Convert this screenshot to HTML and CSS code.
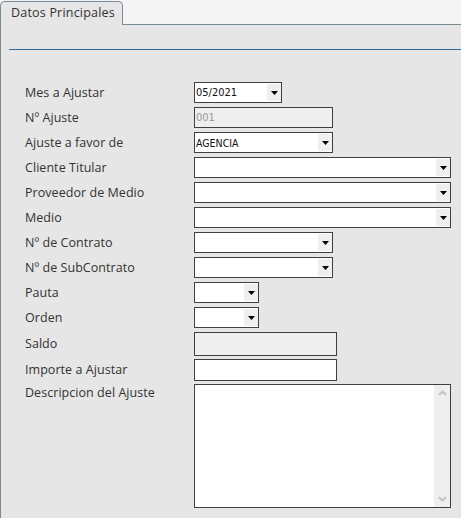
FILE: index.html
```html
<!DOCTYPE html>
<html lang="es">
<head>
<meta charset="utf-8">
<title>Datos Principales</title>
<link rel="stylesheet" href="styles.css">
</head>
<body>
<div class="tabbar">
  <div class="tab">Datos Principales</div>
</div>
<div class="panel">
  <div class="rule"></div>
  <div class="form">
    <div class="row">
      <span class="label">Mes a Ajustar</span>
      <div class="ctl select w88"><span class="val">05/2021</span><span class="arrow"><svg width="7" height="4" viewBox="0 0 7 4"><polygon points="0,0 7,0 3.5,4" fill="#000"/></svg></span></div>
    </div>
    <div class="row">
      <span class="label">Nº Ajuste</span>
      <div class="ctl disabled w139"><span class="val grey">001</span></div>
    </div>
    <div class="row">
      <span class="label">Ajuste a favor de</span>
      <div class="ctl select w139"><span class="val small">AGENCIA</span><span class="arrow"><svg width="7" height="4" viewBox="0 0 7 4"><polygon points="0,0 7,0 3.5,4" fill="#000"/></svg></span></div>
    </div>
    <div class="row">
      <span class="label">Cliente Titular</span>
      <div class="ctl select w257"><span class="val"></span><span class="arrow"><svg width="7" height="4" viewBox="0 0 7 4"><polygon points="0,0 7,0 3.5,4" fill="#000"/></svg></span></div>
    </div>
    <div class="row">
      <span class="label">Proveedor de Medio</span>
      <div class="ctl select w257"><span class="val"></span><span class="arrow"><svg width="7" height="4" viewBox="0 0 7 4"><polygon points="0,0 7,0 3.5,4" fill="#000"/></svg></span></div>
    </div>
    <div class="row">
      <span class="label">Medio</span>
      <div class="ctl select w257"><span class="val"></span><span class="arrow"><svg width="7" height="4" viewBox="0 0 7 4"><polygon points="0,0 7,0 3.5,4" fill="#000"/></svg></span></div>
    </div>
    <div class="row">
      <span class="label">Nº de Contrato</span>
      <div class="ctl select w139"><span class="val"></span><span class="arrow"><svg width="7" height="4" viewBox="0 0 7 4"><polygon points="0,0 7,0 3.5,4" fill="#000"/></svg></span></div>
    </div>
    <div class="row">
      <span class="label">Nº de SubContrato</span>
      <div class="ctl select w139"><span class="val"></span><span class="arrow"><svg width="7" height="4" viewBox="0 0 7 4"><polygon points="0,0 7,0 3.5,4" fill="#000"/></svg></span></div>
    </div>
    <div class="row">
      <span class="label">Pauta</span>
      <div class="ctl select w65"><span class="val"></span><span class="arrow"><svg width="7" height="4" viewBox="0 0 7 4"><polygon points="0,0 7,0 3.5,4" fill="#000"/></svg></span></div>
    </div>
    <div class="row">
      <span class="label">Orden</span>
      <div class="ctl select w65"><span class="val"></span><span class="arrow"><svg width="7" height="4" viewBox="0 0 7 4"><polygon points="0,0 7,0 3.5,4" fill="#000"/></svg></span></div>
    </div>
    <div class="row tight">
      <span class="label">Saldo</span>
      <div class="ctl disabled w143 h24"></div>
    </div>
    <div class="row tight">
      <span class="label">Importe a Ajustar</span>
      <div class="ctl w143 h22"></div>
    </div>
    <div class="row top">
      <span class="label">Descripcion del Ajuste</span>
      <div class="ctl textarea w257">
        <div class="sb">
          <svg width="9" height="6" viewBox="0 0 9 6"><polyline points="1,5 4.5,1.5 8,5" fill="none" stroke="#c4c4c4" stroke-width="2"/></svg>
          <svg width="9" height="6" viewBox="0 0 9 6"><polyline points="1,1 4.5,4.5 8,1" fill="none" stroke="#c4c4c4" stroke-width="2"/></svg>
        </div>
      </div>
    </div>
  </div>
</div>
</body>
</html>
```

FILE: styles.css
```css
html, body {
  margin: 0;
  padding: 0;
}
body {
  background: #f4f4f4;
  font-family: "Open Sans", "Noto Sans", sans-serif;
  color: #333;
  width: 461px;
  height: 518px;
  overflow: hidden;
}
.tabbar {
  height: 25px;
  border-bottom: 1px solid #7a8a94;
  box-sizing: border-box;
  padding-top: 1px;
}
.tab {
  width: 123px;
  height: 24px;
  box-sizing: border-box;
  border: 1px solid #7a8a94;
  border-bottom: none;
  border-radius: 5px 5px 0 0;
  background: #e6e6e6;
  font-size: 12.5px;
  letter-spacing: 0.2px;
  line-height: 22px;
  padding-left: 10px;
  color: #333;
  white-space: nowrap;
}
.panel {
  background: #e6e6e6;
  border-left: 1px solid #7a8a94;
  height: 493px;
  padding-top: 24px;
  box-sizing: border-box;
}
.rule {
  margin-left: 8px;
  height: 1px;
  background: #2f6b9a;
}
.form {
  padding-top: 32px;
  padding-left: 24px;
}
.row {
  display: flex;
  align-items: center;
  margin-bottom: 4px;
}
.row.tight {
  margin-bottom: 3px;
}
.row.top {
  align-items: flex-start;
}
.label {
  width: 169px;
  flex: none;
  font-size: 12.5px;
  letter-spacing: 0.05px;
  line-height: 16px;
  white-space: nowrap;
}
.row.top .label {
  line-height: 18px;
  padding-top: 0;
}
.ctl {
  box-sizing: border-box;
  height: 21px;
  border: 1px solid #3f3f3f;
  background: #fff;
  display: flex;
  align-items: center;
  flex: none;
}
.disabled {
  background: #efefef;
}
.w65 { width: 65px; }
.w88 { width: 88px; }
.w139 { width: 139px; }
.w143 { width: 143px; }
.w257 { width: 257px; }
.h24 { height: 24px; }
.h22 { height: 22px; }
.val {
  flex: 1;
  font-family: "DejaVu Sans Condensed", "DejaVu Sans", sans-serif;
  font-size: 11px;
  color: #111;
  padding-left: 1px;
  white-space: nowrap;
  overflow: hidden;
}
.val.small {
  font-size: 10.5px;
}
.val.grey {
  color: #9a9a9a;
}
.arrow {
  width: 14px;
  align-self: stretch;
  margin: 1px 0;
  background: #efefef;
  display: flex;
  align-items: center;
  justify-content: center;
}
.arrow svg {
  display: block;
}
.textarea {
  height: 124px;
  justify-content: flex-end;
  align-items: stretch;
}
.sb {
  width: 16px;
  background: #efefef;
  display: flex;
  flex-direction: column;
  justify-content: space-between;
  align-items: center;
  padding: 5px 0 5px;
  box-sizing: border-box;
}
.sb svg {
  display: block;
}
```
